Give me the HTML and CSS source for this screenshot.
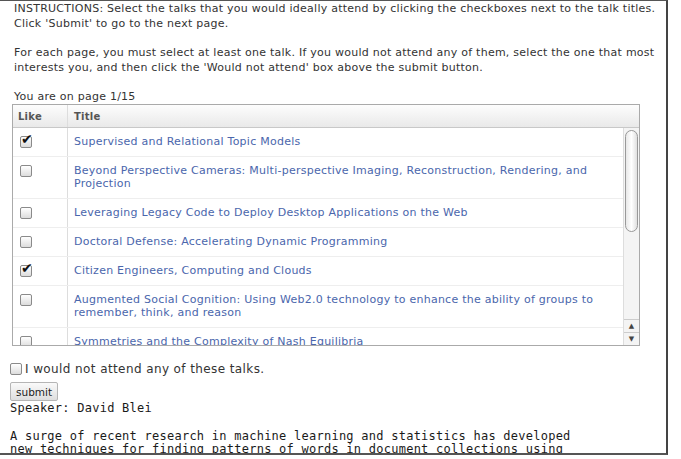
FILE: index.html
```html
<!DOCTYPE html>
<html lang="en">

<head>
    <meta charset="UTF-8" />
    <title>Talk preferences</title>
    <link rel="stylesheet" href="styles.css">
</head>

<body>
    <div class="frame">
        <div class="instructions">
            <p>INSTRUCTIONS: Select the talks that you would ideally attend by clicking the checkboxes next to the talk titles. Click 'Submit' to go to the next page.</p>
            <p>For each page, you must select at least one talk. If you would not attend any of them, select the one that most interests you, and then click the 'Would not attend' box above the submit button.</p>
            <p>You are on page 1/15</p>
        </div>

        <div class="talks">
            <div class="talks-head">
                <div class="col-like">Like</div>
                <div class="col-title">Title</div>
            </div>
            <div class="talks-body">
                <div class="rows">
                    <div class="row">
                        <div class="col-like"><span class="cb checked"></span></div>
                        <div class="col-title"><a href="#">Supervised and Relational Topic Models</a></div>
                    </div>
                    <div class="row">
                        <div class="col-like"><span class="cb"></span></div>
                        <div class="col-title"><a href="#">Beyond Perspective Cameras: Multi-perspective Imaging, Reconstruction, Rendering, and Projection</a></div>
                    </div>
                    <div class="row">
                        <div class="col-like"><span class="cb"></span></div>
                        <div class="col-title"><a href="#">Leveraging Legacy Code to Deploy Desktop Applications on the Web</a></div>
                    </div>
                    <div class="row">
                        <div class="col-like"><span class="cb"></span></div>
                        <div class="col-title"><a href="#">Doctoral Defense: Accelerating Dynamic Programming</a></div>
                    </div>
                    <div class="row">
                        <div class="col-like"><span class="cb checked"></span></div>
                        <div class="col-title"><a href="#">Citizen Engineers, Computing and Clouds</a></div>
                    </div>
                    <div class="row">
                        <div class="col-like"><span class="cb"></span></div>
                        <div class="col-title"><a href="#">Augmented Social Cognition: Using Web2.0 technology to enhance the ability of groups to remember, think, and reason</a></div>
                    </div>
                    <div class="row">
                        <div class="col-like"><span class="cb"></span></div>
                        <div class="col-title"><a href="#">Symmetries and the Complexity of Nash Equilibria</a></div>
                    </div>
                </div>
                <div class="scrollbar">
                    <div class="track"><div class="thumb"></div></div>
                    <div class="arrow">&#9650;</div>
                    <div class="arrow">&#9660;</div>
                </div>
            </div>
        </div>

        <label class="nope"><span class="cb"></span>I would not attend any of these talks.</label>
        <button class="submit">submit</button>

        <div class="abstract">
            <div>Speaker: David Blei</div>
            <p>A surge of recent research in machine learning and statistics has developed<br>new techniques for finding patterns of words in document collections using</p>
        </div>
    </div>
</body>

</html>
```

FILE: styles.css
```css
html,
body {
    margin: 0;
    padding: 0;
    background: #fff;
}

body {
    font-family: 'DejaVu Sans', sans-serif;
    font-size: 11px;
    letter-spacing: 0.25px;
    color: #333;
}

.frame {
    width: 656px;
    height: 452px;
    padding-left: 10px;
    border-top: 1px solid #555;
    border-right: 2px solid #444;
    border-bottom: 2px solid #555;
    overflow: hidden;
}

.instructions {
    padding: 0 4px;
    line-height: 15px;
}

.instructions p {
    margin: 0 0 14px;
}

.instructions p:last-child {
    margin-bottom: 0;
}

.talks {
    margin: 0 0 0 2px;
    width: 626px;
    border: 1px solid #aaa;
}

.talks-head {
    display: flex;
    height: 22px;
    align-items: center;
    background: linear-gradient(#fdfdfd, #e9e9e9);
    border-bottom: 1px solid #c8c8c8;
    font-weight: bold;
    font-size: 10px;
    color: #555;
}

.col-like {
    width: 55px;
    padding-left: 5px;
    box-sizing: border-box;
    border-right: 1px solid #ddd;
    align-self: stretch;
    display: flex;
    align-items: center;
}

.col-title {
    flex: 1;
    padding-left: 6px;
}

.talks-body {
    display: flex;
    height: 217px;
    overflow: hidden;
}

.rows {
    flex: 1;
}

.row {
    display: flex;
    border-bottom: 1px solid #eee;
}

.row .col-like {
    align-items: flex-start;
    padding: 8px 0 0 7px;
}

.row .col-title {
    padding: 7px 12px 8px 6px;
    line-height: 13px;
}

.row a {
    color: #4a66ac;
    text-decoration: none;
}

.cb {
    display: inline-block;
    width: 10px;
    height: 10px;
    border: 1px solid #8a8a8a;
    border-radius: 2px;
    background: linear-gradient(#fff, #dcdcdc);
    position: relative;
}

.cb.checked::after {
    content: "\2714";
    position: absolute;
    left: 0;
    top: -6px;
    font-size: 14px;
    color: #111;
}

.scrollbar {
    width: 15px;
    display: flex;
    flex-direction: column;
    border-left: 1px solid #ddd;
    background: #f4f4f4;
}

.track {
    flex: 1;
    padding: 2px 1px;
}

.thumb {
    height: 100px;
    border: 1px solid #999;
    border-radius: 7px;
    background: linear-gradient(90deg, #e8e8e8, #fff, #e0e0e0);
}

.arrow {
    height: 12px;
    font-size: 7px;
    text-align: center;
    line-height: 12px;
    color: #444;
    border-top: 1px solid #ccc;
}

.nope {
    display: flex;
    align-items: center;
    margin-top: 16px;
    font-size: 12px;
    letter-spacing: 0.4px;
    color: #333;
}

.nope .cb {
    margin-right: 3px;
}

.submit {
    display: block;
    margin: 6px 0 1px;
    padding: 0 5px;
    height: 19px;
    font-family: 'DejaVu Sans', sans-serif;
    font-size: 10.5px;
    color: #222;
    border: 1px solid #b5b5b5;
    border-radius: 2px;
    background: linear-gradient(#fafafa, #dedede);
}

.abstract {
    font-family: 'DejaVu Sans Mono', monospace;
    font-size: 12px;
    letter-spacing: 0.25px;
    line-height: 13px;
    color: #1a1a1a;
}

.abstract p {
    margin: 15px 0 0;
}
```
